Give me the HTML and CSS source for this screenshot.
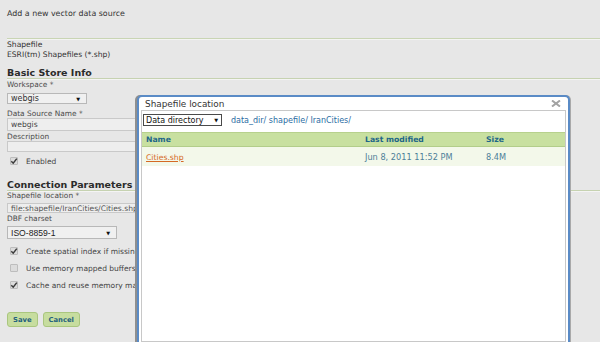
FILE: index.html
```html
<!DOCTYPE html>
<html>
<head>
<meta charset="utf-8">
<link rel="stylesheet" href="styles.css">
</head>
<body>
<div class="page">
  <div class="intro">Add a new vector data source</div>
  <div class="rule"></div>
  <div class="text">Shapefile</div>
  <div class="text">ESRI(tm) Shapefiles (*.shp)</div>

  <h2 class="section s-basic">Basic Store Info</h2>
  <div class="lbl l-ws">Workspace *</div>
  <div class="select sel-ws"><span>webgis</span><span class="arrow">▼</span></div>
  <div class="lbl l-dsn">Data Source Name *</div>
  <div class="input in-name">webgis</div>
  <div class="lbl l-desc">Description</div>
  <div class="input in-desc"></div>
  <div class="check-row r-enabled"><span class="box"><svg viewBox="0 0 8 8" width="8" height="8"><path d="M1.3 4.3 L3.2 6.2 L6.8 1.6" fill="none" stroke="#3a3a3a" stroke-width="1.5"/></svg></span>Enabled</div>

  <h2 class="section s-conn">Connection Parameters</h2>
  <div class="lbl l-shp">Shapefile location *</div>
  <div class="input in-shp">file:shapefile/IranCities/Cities.shp</div>
  <div class="lbl l-dbf">DBF charset</div>
  <div class="select sel-iso"><span class="iso">ISO-8859-1</span><span class="arrow">▼</span></div>
  <div class="check-row r-1"><span class="box"><svg viewBox="0 0 8 8" width="8" height="8"><path d="M1.3 4.3 L3.2 6.2 L6.8 1.6" fill="none" stroke="#3a3a3a" stroke-width="1.5"/></svg></span>Create spatial index if missing/outdated</div>
  <div class="check-row r-2"><span class="box"></span>Use memory mapped buffers</div>
  <div class="check-row r-3"><span class="box"><svg viewBox="0 0 8 8" width="8" height="8"><path d="M1.3 4.3 L3.2 6.2 L6.8 1.6" fill="none" stroke="#3a3a3a" stroke-width="1.5"/></svg></span>Cache and reuse memory maps</div>

  <div class="buttons">
    <span class="btn">Save</span>
    <span class="btn">Cancel</span>
  </div>
</div>

<div class="dialog">
  <div class="dlg-title">
    <span>Shapefile location</span>
    <svg class="close" viewBox="0 0 10 7" width="10" height="7"><path d="M1 0.5 L9 6.5 M9 0.5 L1 6.5" stroke="#a3a3a3" stroke-width="2"/></svg>
  </div>
  <div class="dlg-body">
    <div class="dlg-bar">
      <div class="dsel"><span>Data directory</span><span class="darrow">▼</span></div>
      <div class="crumbs">data_dir/ shapefile/ IranCities/</div>
    </div>
    <div class="table">
      <div class="thead">
        <span class="c-name">Name</span>
        <span class="c-mod">Last modified</span>
        <span class="c-size">Size</span>
      </div>
      <div class="trow">
        <span class="c-name"><a class="link">Cities.shp</a></span>
        <span class="c-mod">Jun 8, 2011 11:52 PM</span>
        <span class="c-size">8.4M</span>
      </div>
    </div>
  </div>
</div>
</body>
</html>
```

FILE: styles.css
```css
html, body {
  margin: 0;
  padding: 0;
}
body {
  background: #e7e7e7;
  font-family: "DejaVu Sans", Verdana, sans-serif;
  color: #333;
  width: 600px;
  height: 342px;
  overflow: hidden;
  position: relative;
}
.page {
  padding: 9px 0 0 7px;
}
.intro {
  font-size: 7.9px;
  line-height: 10px;
  height: 10px;
  color: #333;
}
.rule {
  margin-top: 19px;
  height: 0;
  border-top: 1px solid #c9d5b4;
  border-bottom: 1px solid #f4f4f4;
}
.text {
  font-size: 7.6px;
  line-height: 10px;
  height: 10px;
  color: #333;
}
.section {
  margin: 0;
  font-size: 9.5px;
  font-weight: bold;
  line-height: 11px;
  height: 11px;
  color: #2b2b2b;
  border-bottom: 1px solid #c6d2b1;
  box-shadow: 0 1px 0 #f4f4f4;
}
.s-basic { margin-top: 7px; }
.s-conn { margin-top: 13px; }
.lbl {
  font-size: 7.4px;
  line-height: 9px;
  height: 9px;
  color: #4a4a4a;
}
.l-ws { margin-top: 1px; }
.l-dsn { margin-top: 5px; }
.l-desc { margin-top: 1px; }
.l-shp { margin-top: 0; }
.l-dbf { margin-top: 1px; }

.select {
  box-sizing: border-box;
  display: flex;
  align-items: center;
  justify-content: space-between;
  background: #f0f0f0;
  border: 1px solid #b8b8b8;
  font-size: 8px;
  color: #333;
  padding: 0 6px 0 3px;
}
.sel-ws {
  margin-top: 4px;
  width: 80px;
  height: 11px;
}
.sel-iso {
  margin-top: 3px;
  width: 110px;
  height: 13px;
}
.iso {
  font-family: "Liberation Sans", Arial, sans-serif;
  font-size: 8.6px;
  color: #222;
}
.arrow {
  font-size: 5px;
  color: #111;
}
.input {
  box-sizing: border-box;
  width: 280px;
  background: #eeeeee;
  border: 1px solid #c9c9c9;
  font-size: 7.6px;
  color: #444;
  padding-left: 3px;
  display: flex;
  align-items: center;
  white-space: nowrap;
  overflow: hidden;
}
.in-name { height: 13px; }
.in-desc { height: 11px; }
.in-shp { height: 10px; margin-top: 3px; color: #555; }

.check-row {
  display: flex;
  align-items: center;
  height: 10px;
  font-size: 7.5px;
  color: #444;
  padding-left: 3px;
  white-space: nowrap;
}
.r-enabled { margin-top: 4px; }
.r-1 { margin-top: 7px; }
.r-2, .r-3 { margin-top: 7px; }
.box {
  box-sizing: border-box;
  width: 8px;
  height: 8px;
  background: #dcdcdc;
  border: 1px solid #bdbdbd;
  border-radius: 1px;
  margin-right: 8px;
  display: flex;
  align-items: center;
  justify-content: center;
  overflow: visible;
}
.box svg { display: block; flex: none; }

.buttons {
  margin-top: 22px;
  display: flex;
  gap: 5px;
}
.btn {
  box-sizing: border-box;
  height: 15px;
  padding: 0 5px;
  display: flex;
  align-items: center;
  background: #c7dd9f;
  border: 1px solid #aac67f;
  border-radius: 3px;
  font-size: 6.8px;
  font-weight: bold;
  color: #23607e;
}

/* dialog overlay */
.dialog {
  position: absolute;
  left: 137px;
  top: 95px;
  width: 433px;
  height: 260px;
  box-sizing: border-box;
  background: #fff;
  border: 2px solid #5a8bc6;
  border-bottom: none;
  border-radius: 5px 5px 0 0;
  box-shadow: -2px 0 0 #8f8f8f, 1px 0 0 #a9a9a9;
  padding: 0 2px;
}
.dlg-title {
  height: 13px;
  display: flex;
  align-items: center;
  justify-content: space-between;
  padding: 0 5px 0 4px;
  font-size: 8.9px;
  color: #333;
}
.close { display: block; margin-top: 0; }
.dlg-body {
  box-sizing: border-box;
  height: 232px;
  border: 1px solid #c8c8c8;
}
.dlg-bar {
  display: flex;
  align-items: center;
  margin-top: 3px;
  padding-left: 1px;
}
.dsel {
  box-sizing: border-box;
  width: 79px;
  height: 12px;
  border: 1px solid #4a4a4a;
  display: flex;
  align-items: center;
  justify-content: space-between;
  padding: 0 3px 0 2px;
  font-size: 8px;
  color: #111;
  background: #fff;
}
.darrow { font-size: 5px; color: #111; }
.crumbs {
  margin-left: 9px;
  font-size: 8px;
  color: #2b6ca3;
}
.table {
  margin-top: 6px;
}
.thead, .trow {
  display: grid;
  grid-template-columns: 219px 121px 1fr;
  align-items: center;
}
.thead {
  height: 15px;
  background: #c8e0a0;
  border-top: 1px solid #b7d18d;
  border-bottom: 1px solid #b2cd8a;
  box-sizing: border-box;
  font-size: 7.7px;
  font-weight: bold;
  color: #1e6688;
}
.trow {
  height: 19px;
  background: #f3f8ea;
  font-size: 8.2px;
  color: #4d7f99;
}
.c-name, .c-mod, .c-size { padding-left: 4px; white-space: nowrap; }
.link {
  color: #d56a24;
  text-decoration: underline;
  font-size: 7.7px;
}
```
